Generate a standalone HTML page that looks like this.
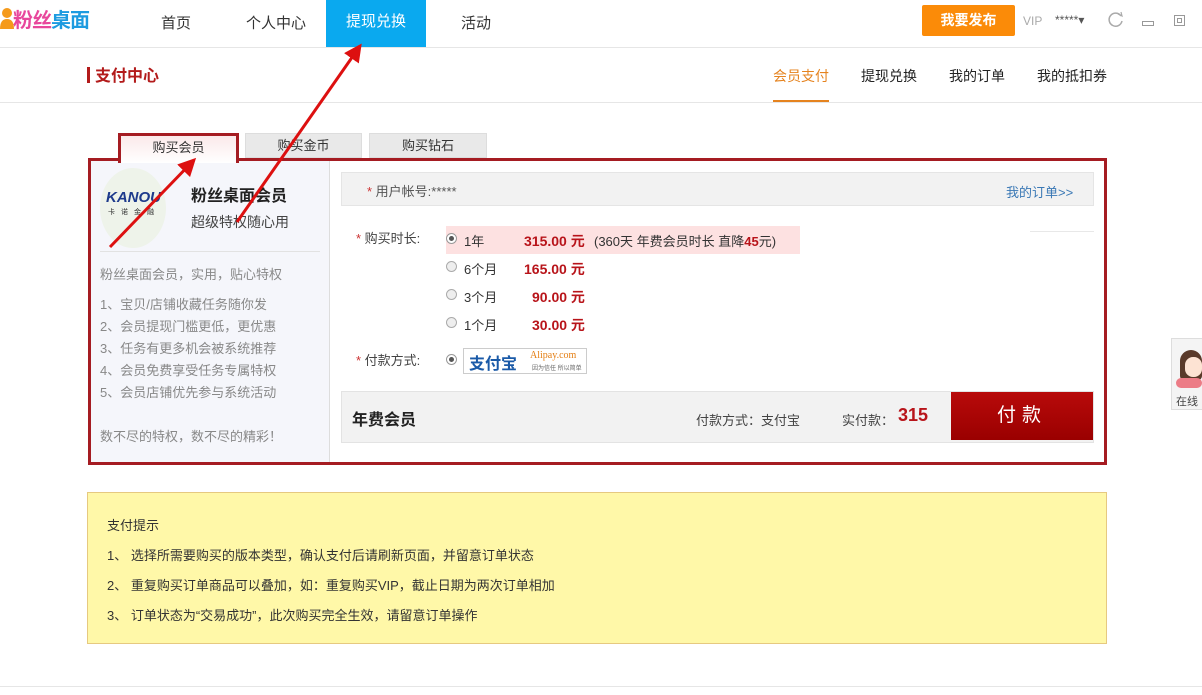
<!DOCTYPE html>
<html><head><meta charset="utf-8"><style>
*{margin:0;padding:0;box-sizing:border-box}
body{width:1202px;height:695px;background:#fff;position:relative;overflow:hidden;font-family:"Liberation Sans","Noto Sans CJK SC",sans-serif;font-size:13px;color:#333}
.a{position:absolute;white-space:nowrap}
</style></head><body>
<div class="a" style="left:0;top:47px;width:1202px;height:1px;background:#e6e6e6"></div>
<div class="a" style="left:0;top:7px;width:14px;height:20px;">
<svg width="14" height="22"><circle cx="7" cy="6" r="5" fill="#f59a1b"/><path d="M0 22 Q0 12 7 12 Q14 12 14 22Z" fill="#f59a1b"/></svg></div>
<div class="a" style="left:13px;top:4px;font-size:20px;font-weight:bold;letter-spacing:-1px"><span style="color:#e8479c">粉丝</span><span style="color:#1d9be0">桌面</span></div>
<div class="a" style="left:161px;top:12px;font-size:15px">首页</div>
<div class="a" style="left:246px;top:12px;font-size:15px">个人中心</div>
<div class="a" style="left:326px;top:0;width:100px;height:47px;background:#0aa9ef;color:#fff;font-size:15px;text-align:center;line-height:44px">提现兑换</div>
<div class="a" style="left:461px;top:12px;font-size:15px">活动</div>
<div class="a" style="left:922px;top:5px;width:93px;height:31px;background:#fb8b08;border-radius:2px;color:#fff;font-weight:bold;font-size:14px;text-align:center;line-height:31px">我要发布</div>
<div class="a" style="left:1023px;top:14px;color:#aaa;font-size:12px">VIP</div>
<div class="a" style="left:1055px;top:13px;color:#555;font-size:12px">*****▾</div>
<div class="a" style="left:1107px;top:11px"><svg width="17" height="17"><path d="M14 5 A6.5 6.5 0 1 0 15 10" fill="none" stroke="#aaa" stroke-width="1.5"/><path d="M11 3 L15 5 L14 1" fill="none" stroke="#aaa" stroke-width="1.2"/></svg></div>
<div class="a" style="left:1142px;top:21px;width:12px;height:5px;border:1px solid #999"></div>
<div class="a" style="left:1174px;top:15px;width:11px;height:11px;border:1px solid #999"><div style="margin:2px;width:5px;height:5px;border:1px solid #999"></div></div>
<div class="a" style="left:0;top:102px;width:1202px;height:1px;background:#e6e6e6"></div>
<div class="a" style="left:87px;top:67px;width:3px;height:16px;background:#b31b1b"></div>
<div class="a" style="left:95px;top:62px;font-size:16px;font-weight:bold;color:#b31b1b">支付中心</div>
<div class="a" style="left:773px;top:66px;font-size:14px;color:#e5831f">会员支付</div>
<div class="a" style="left:773px;top:100px;width:56px;height:2px;background:#e5831f"></div>
<div class="a" style="left:861px;top:66px;font-size:14px;color:#222">提现兑换</div>
<div class="a" style="left:949px;top:66px;font-size:14px;color:#222">我的订单</div>
<div class="a" style="left:1037px;top:66px;font-size:14px;color:#222">我的抵扣券</div>
<div class="a" style="left:245px;top:133px;width:117px;height:25px;background:#e9e9e9;border:1px solid #ddd;text-align:center;line-height:24px">购买金币</div>
<div class="a" style="left:369px;top:133px;width:118px;height:25px;background:#e9e9e9;border:1px solid #ddd;text-align:center;line-height:24px">购买钻石</div>
<div class="a" style="left:88px;top:158px;width:1019px;height:307px;border:3px solid #a51c22"></div>
<div class="a" style="left:118px;top:133px;width:121px;height:30px;border:3px solid #a51c22;border-bottom:none;background:linear-gradient(#fbe9ea,#fff);text-align:center;line-height:24px;z-index:2">购买会员</div>
<div class="a" style="left:91px;top:161px;width:239px;height:301px;background:#f5f6fb;border-right:1px solid #ddd"></div>
<div class="a" style="left:100px;top:168px;width:66px;height:80px;border-radius:50%;background:#eef3ea"></div>
<div class="a" style="left:106px;top:189px;font-size:15px;font-weight:900;color:#1d3a8c;font-style:italic">KANOU</div>
<div class="a" style="left:108px;top:207px;font-size:7px;color:#333;letter-spacing:6px">卡诺金融</div>
<div class="a" style="left:191px;top:182px;font-size:16px;font-weight:bold;color:#222">粉丝桌面会员</div>
<div class="a" style="left:191px;top:212px;font-size:14px;color:#444">超级特权随心用</div>
<div class="a" style="left:100px;top:251px;width:220px;height:1px;background:#e2e2e2"></div>
<div class="a" style="left:100px;top:264px;color:#888;font-size:13px">粉丝桌面会员，实用，贴心特权</div>
<div class="a" style="left:100px;top:294px;color:#888;font-size:13px;line-height:22px">1、宝贝/店铺收藏任务随你发<br>2、会员提现门槛更低，更优惠<br>3、任务有更多机会被系统推荐<br>4、会员免费享受任务专属特权<br>5、会员店铺优先参与系统活动</div>
<div class="a" style="left:100px;top:426px;color:#888;font-size:13px">数不尽的特权，数不尽的精彩！</div>
<div class="a" style="left:341px;top:172px;width:753px;height:34px;background:#f2f2f2;border:1px solid #e5e5e5"></div>
<div class="a" style="left:367px;top:181px;color:#555"><span style="color:#c33">*</span> 用户帐号:*****</div>
<div class="a" style="left:1006px;top:182px;color:#3a78b5">我的订单&gt;&gt;</div>
<div class="a" style="left:1030px;top:231px;width:64px;height:1px;background:#e8e8e8"></div>
<div class="a" style="left:356px;top:228px;color:#444"><span style="color:#c33">*</span> 购买时长:</div>
<div class="a" style="left:446px;top:226px;width:354px;height:28px;background:#fde1e1"></div>
<div class="a" style="left:356px;top:350px;color:#444"><span style="color:#c33">*</span> 付款方式:</div>
<div style="position:absolute;left:446px;top:0;font-size:13px">
<div class="a" style="top:233px;left:0;width:11px;height:11px;border-radius:50%;border:1px solid #999;background:#fff"><div style="margin:2px;width:5px;height:5px;border-radius:50%;background:#555"></div></div>
<div class="a" style="top:261px;left:0;width:11px;height:11px;border-radius:50%;border:1px solid #aaa;background:#eee"></div>
<div class="a" style="top:289px;left:0;width:11px;height:11px;border-radius:50%;border:1px solid #aaa;background:#eee"></div>
<div class="a" style="top:317px;left:0;width:11px;height:11px;border-radius:50%;border:1px solid #aaa;background:#eee"></div>
<div class="a" style="top:354px;left:0;width:11px;height:11px;border-radius:50%;border:1px solid #999;background:#fff"><div style="margin:2px;width:5px;height:5px;border-radius:50%;background:#555"></div></div>
<div class="a" style="top:231px;left:18px">1年</div>
<div class="a" style="top:259px;left:18px">6个月</div>
<div class="a" style="top:287px;left:18px">3个月</div>
<div class="a" style="top:315px;left:18px">1个月</div>
<div class="a" style="top:231px;left:78px;font-weight:bold;color:#b8141a;font-size:14px">315.00 元</div>
<div class="a" style="top:231px;left:148px">(360天 年费会员时长 直降<b style="color:#b8141a">45</b>元)</div>
<div class="a" style="top:259px;left:78px;font-weight:bold;color:#b8141a;font-size:14px">165.00 元</div>
<div class="a" style="top:287px;left:86px;font-weight:bold;color:#b8141a;font-size:14px">90.00 元</div>
<div class="a" style="top:315px;left:86px;font-weight:bold;color:#b8141a;font-size:14px">30.00 元</div>
<div class="a" style="top:348px;left:17px;width:124px;height:26px;border:1px solid #ccc;background:#fff"><span style="position:absolute;left:5px;top:1px;font-size:16px;font-weight:bold;color:#1a5aa8">支付宝</span><span style="position:absolute;left:66px;top:1px;font-size:10px;color:#e47e13;font-family:'Liberation Serif',serif">Alipay.com</span><span style="position:absolute;left:68px;top:14px;font-size:6px;color:#666">因为信任 所以简单</span></div>
</div>
<div class="a" style="left:341px;top:391px;width:753px;height:52px;background:#f2f2f2;border:1px solid #e3e3e3"></div>
<div class="a" style="left:352px;top:406px;font-size:16px;font-weight:bold;color:#222">年费会员</div>
<div class="a" style="left:696px;top:410px;color:#444">付款方式：支付宝</div>
<div class="a" style="left:842px;top:410px;color:#444">实付款：</div>
<div class="a" style="left:898px;top:405px;font-size:18px;font-weight:bold;color:#b8141a">315</div>
<div class="a" style="left:951px;top:392px;width:142px;height:48px;background:linear-gradient(#b80a0a,#9a0000);color:#fff;font-size:19px;text-align:center;line-height:48px;letter-spacing:6px">付款</div>
<div class="a" style="left:1171px;top:338px;width:40px;height:72px;background:#f4f4f4;border:1px solid #ddd"></div>
<div class="a" style="left:1180px;top:350px;width:22px;height:30px;border-radius:11px 11px 4px 4px;background:#5a3a2a"></div>
<div class="a" style="left:1185px;top:357px;width:17px;height:20px;border-radius:8px;background:#fde3d3"></div>
<div class="a" style="left:1176px;top:378px;width:26px;height:10px;border-radius:5px;background:#ec7c86"></div>
<div class="a" style="left:1176px;top:393px;font-size:11px;color:#444">在线</div>
<div class="a" style="left:87px;top:492px;width:1020px;height:152px;background:#fff8a8;border:1px solid #e6c980"></div>
<div class="a" style="left:107px;top:511px;color:#333;line-height:30px">支付提示<br>1、 选择所需要购买的版本类型，确认支付后请刷新页面，并留意订单状态<br>2、 重复购买订单商品可以叠加，如：重复购买VIP，截止日期为两次订单相加<br>3、 订单状态为“交易成功”，此次购买完全生效，请留意订单操作</div>
<div class="a" style="left:0;top:686px;width:1202px;height:1px;background:#e6e6e6"></div>
<svg class="a" style="left:0;top:0;z-index:5" width="1202" height="695">
<defs><marker id="m" markerWidth="6" markerHeight="6" refX="5" refY="3" orient="auto"><path d="M0 0 L6 3 L0 6Z" fill="#dd1010"/></marker></defs>
<line x1="110" y1="247" x2="194" y2="160" stroke="#dd1010" stroke-width="3" marker-end="url(#m)"/>
<line x1="237" y1="222" x2="360" y2="46" stroke="#dd1010" stroke-width="3" marker-end="url(#m)"/>
</svg>
</body></html>
